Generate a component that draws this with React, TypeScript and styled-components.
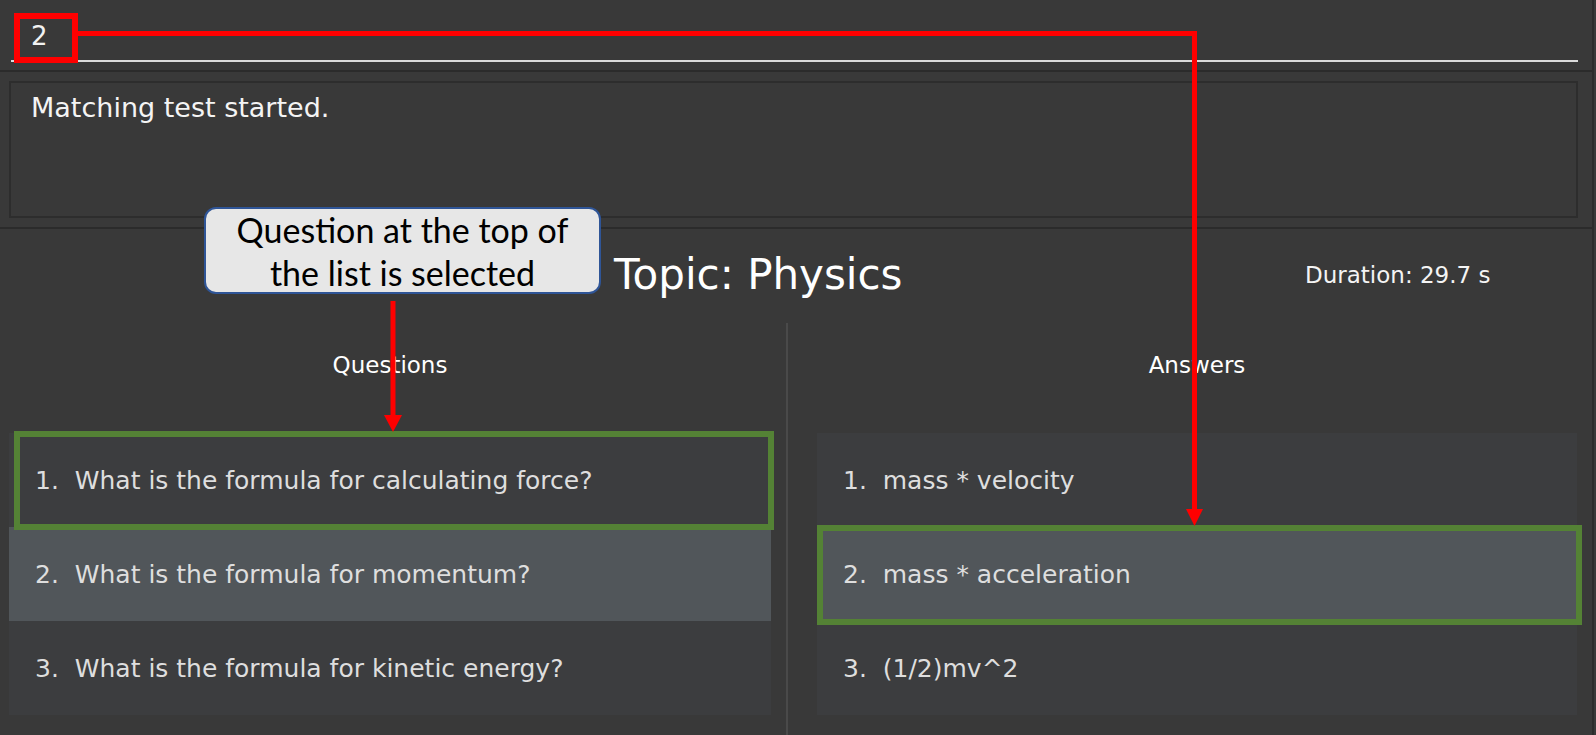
import React from "react";
import styled, { createGlobalStyle } from "styled-components";

const GlobalStyle = createGlobalStyle`
  html, body {
    margin: 0;
    padding: 0;
    background: #393939;
    overflow: hidden;
  }
  body {
    font-family: "DejaVu Sans", "Liberation Sans", sans-serif;
  }
`;

const Page = styled.div`
  position: relative;
  width: 1592px;
  height: 735px;
  border-right: 2px solid #2c2c2c;
  background: #393939;
  display: flex;
  flex-direction: column;
`;

const CommandSection = styled.div`
  padding: 0 14px 8px 11px;
  border-bottom: 2px solid #2b2b2b;
`;

const CommandInput = styled.div`
  height: 37px;
  padding: 23px 0 0 20px;
  border-bottom: 2px solid #dcdcdc;
  color: #f2f2f2;
  font-size: 26px;
  line-height: 26px;
`;

const ResultSection = styled.div`
  padding: 9px 14px 9px 9px;
  border-bottom: 2px solid #2b2b2b;
`;

const ResultBox = styled.div`
  height: 133px;
  border: 2px solid #2d2d2d;
  padding: 0 0 0 20px;
  box-sizing: content-box;
`;

const ResultText = styled.div`
  padding-top: 9px;
  color: #f4f4f4;
  font-size: 27px;
  line-height: 32px;
`;

const MatchSection = styled.div`
  flex: 1;
  display: flex;
  flex-direction: column;
`;

const Header = styled.div`
  display: grid;
  grid-template-columns: 614px 691px 1fr;
  align-items: center;
  padding: 21px 0 23px;
`;

const Topic = styled.div`
  grid-column: 2;
  color: #ffffff;
  font-size: 42px;
  line-height: 50px;
`;

const Duration = styled.div`
  grid-column: 3;
  color: #f4f4f4;
  font-size: 23px;
  line-height: 28px;
`;

const Columns = styled.div`
  flex: 1;
  display: grid;
  grid-template-columns: 786px 2px 1fr;
`;

const Column = styled.div<{ $left: number }>`
  padding: 28px 15px 0 ${(p) => p.$left}px;
  display: flex;
  flex-direction: column;
`;

const Divider = styled.div`
  background: #4a4a4a;
  width: 2px;
`;

const ColumnTitle = styled.div`
  text-align: center;
  color: #ffffff;
  font-size: 23px;
  line-height: 28px;
  margin-bottom: 54px;
`;

const List = styled.div`
  display: flex;
  flex-direction: column;
`;

const Row = styled.div<{ $selected?: boolean }>`
  height: 94px;
  display: flex;
  align-items: center;
  padding-left: 26px;
  background: ${(p) => (p.$selected ? "#51565a" : "#3c3d3f")};
  color: #dedede;
  font-size: 25px;
  white-space: pre;
`;

const Callout = styled.div`
  position: absolute;
  left: 204px;
  top: 207px;
  width: 393px;
  height: 83px;
  border: 2px solid #2f5597;
  border-radius: 12px;
  background: #e7e7e7;
  color: #000000;
  font-family: Lato, "Noto Sans", sans-serif;
  font-size: 34px;
  line-height: 43px;
  text-align: center;
  display: flex;
  flex-direction: column;
  justify-content: center;
`;

const Annotations = styled.svg`
  position: absolute;
  left: 0;
  top: 0;
  pointer-events: none;
`;

const questions = [
  "What is the formula for calculating force?",
  "What is the formula for momentum?",
  "What is the formula for kinetic energy?",
];

const answers = ["mass * velocity", "mass * acceleration", "(1/2)mv^2"];

const App = () => {
  return (
    <>
      <GlobalStyle />
      <Page>
        <CommandSection>
          <CommandInput>2</CommandInput>
        </CommandSection>
        <ResultSection>
          <ResultBox>
            <ResultText>Matching test started.</ResultText>
          </ResultBox>
        </ResultSection>
        <MatchSection>
          <Header>
            <Topic>Topic: Physics</Topic>
            <Duration>Duration: 29.7 s</Duration>
          </Header>
          <Columns>
            <Column $left={9}>
              <ColumnTitle>Questions</ColumnTitle>
              <List>
                {questions.map((q, i) => (
                  <Row key={q} $selected={i === 1}>
                    {`${i + 1}.  ${q}`}
                  </Row>
                ))}
              </List>
            </Column>
            <Divider />
            <Column $left={29}>
              <ColumnTitle>Answers</ColumnTitle>
              <List>
                {answers.map((a, i) => (
                  <Row key={a} $selected={i === 1}>
                    {`${i + 1}.  ${a}`}
                  </Row>
                ))}
              </List>
            </Column>
          </Columns>
        </MatchSection>

        <Annotations width="1596" height="735" viewBox="0 0 1596 735">
          {/* selection marks */}
          <rect x="17" y="434" width="754" height="93" fill="none" stroke="#548235" strokeWidth="6" />
          <rect x="820" y="528" width="759" height="94" fill="none" stroke="#548235" strokeWidth="6" />
          {/* command box + link to answer */}
          <rect x="17" y="16" width="58" height="44" fill="none" stroke="#ff0000" strokeWidth="6" />
          <polyline
            points="78,33.5 1194.5,33.5 1194.5,510"
            fill="none"
            stroke="#ff0000"
            strokeWidth="5"
          />
          <polygon points="1186,509 1203,509 1194.5,526" fill="#ff0000" />
          {/* callout arrow */}
          <line x1="393" y1="301" x2="393" y2="416" stroke="#ff0000" strokeWidth="5" />
          <polygon points="384,415 402,415 393,432" fill="#ff0000" />
        </Annotations>
        <Callout>
          <div>Question at the top of</div>
          <div>the list is selected</div>
        </Callout>
      </Page>
    </>
  );
};

export default App;
